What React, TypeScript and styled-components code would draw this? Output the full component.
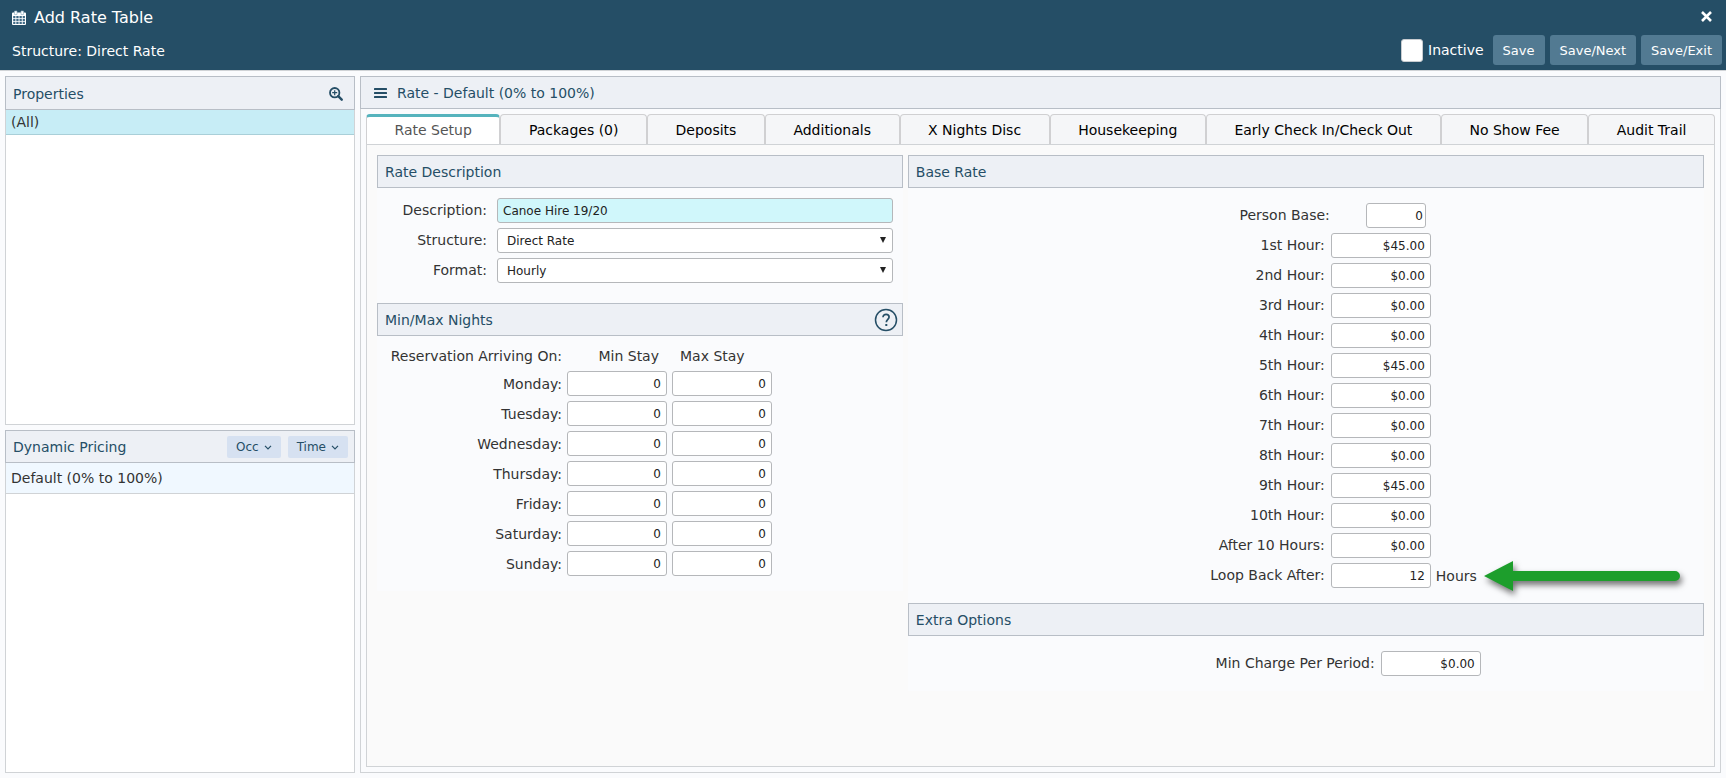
import React, { useId } from 'react';
import styled, { createGlobalStyle, css } from 'styled-components';

const GlobalStyle = createGlobalStyle`
  *, *::before, *::after { box-sizing: border-box; }
  body {
    margin: 0;
    background: #fafbfd;
    color: #333;
    font: 14px/20px Verdana, "DejaVu Sans", sans-serif;
  }
  button, input, select { font-family: inherit; }
`;

const line = '#b8bec6';
const softLine = '#d0d3d6';
const navy = '#254e66';

const Page = styled.div`
  display: flex;
  flex-direction: column;
  min-height: 100vh;
`;

const Header = styled.header`
  display: flex;
  flex-direction: column;
  height: 71px;
  padding: 0 4px 5px 12px;
  background: ${navy};
  border-bottom: 1px solid #d0d3d6;
  color: #fff;
`;

const HeaderRow = styled.div`
  display: flex;
  align-items: center;
  justify-content: space-between;
  height: 35px;
  &:last-child { height: 30px; }
`;

const Title = styled.h1`
  display: flex;
  align-items: center;
  gap: 8px;
  margin: 0;
  font-size: 16px;
  font-weight: 400;
`;

const Subtitle = styled.span`
  padding-top: 2px;
`;

const CloseButton = styled.button`
  display: flex;
  padding: 4px 5px 6px;
  margin-right: 5px;
  border: 0;
  background: none;
  color: #fff;
`;

const Actions = styled.div`
  display: flex;
  align-items: center;
  gap: 5px;
`;

const InactiveLabel = styled.label`
  display: flex;
  align-items: center;
  gap: 5px;
  margin-right: 4px;
`;

const CheckBox = styled.input`
  appearance: none;
  width: 22px;
  height: 23px;
  margin: 0;
  border: 1px solid #c8ccd0;
  border-radius: 3px;
  background: #fff;
`;

const ActionButton = styled.button`
  height: 30px;
  padding: 0 10px;
  border: 0;
  border-radius: 3px;
  background: #527a92;
  color: #fff;
  font-size: 13px;
`;

const Workspace = styled.div`
  display: grid;
  grid-template-columns: 350px minmax(0, 1fr);
  gap: 5px;
  flex: 1;
  padding: 5px;
`;

const Sidebar = styled.aside`
  display: grid;
  grid-template-rows: 51fr 50fr;
  gap: 5px;
`;

const Panel = styled.section<{ $white?: boolean }>`
  display: flex;
  flex-direction: column;
  border: 1px solid ${softLine};
  background: ${(p) => (p.$white ? '#fff' : '#fafbfd')};
`;

const PanelHead = styled.div<{ $tall?: boolean }>`
  display: flex;
  align-items: center;
  gap: 10px;
  height: ${(p) => (p.$tall ? 34 : 33)}px;
  margin: -1px -1px 0;
  padding: 1px 6px 0 7px;
  border: 1px solid ${line};
  background: #edf0f5;
  color: ${navy};
`;

const PanelTitle = styled.h2`
  margin: 0;
  font-size: 14px;
  font-weight: 400;
`;

const HeadTools = styled.div`
  display: flex;
  gap: 7px;
  margin-left: auto;
`;

const IconButton = styled.button`
  display: flex;
  padding: 0 5px;
  border: 0;
  background: none;
  color: ${navy};
`;

const DropButton = styled.button`
  display: flex;
  align-items: center;
  gap: 5px;
  height: 22px;
  padding: 0 9px;
  border: 0;
  border-radius: 2px;
  background: #d6e1f1;
  color: ${navy};
  font-size: 12px;
`;

const ListItem = styled.div<{ $selected?: boolean }>`
  padding: ${(p) => (p.$selected ? '2px 5px' : '5px')};
  border-bottom: 1px solid ${(p) => (p.$selected ? '#a9cfd8' : softLine)};
  background: ${(p) => (p.$selected ? '#c7edf6' : '#f0f8ff')};
`;

const MenuButton = styled(IconButton)`
  padding: 0 0 0 6px;
`;

const HelpButton = styled(IconButton)`
  padding: 0;
`;

const TabArea = styled.div`
  display: flex;
  flex-direction: column;
  flex: 1;
  margin: 5px;
`;

const TabList = styled.div`
  display: flex;
  height: 30px;
`;

const Tab = styled.button<{ $active?: boolean }>`
  flex: 1 1 auto;
  padding: 0;
  border: 1px solid #d0d0d2;
  border-bottom: 0;
  border-radius: 4px 4px 0 0;
  background: #f5f6f8;
  color: #000;
  font-size: 14px;
  ${(p) =>
    p.$active &&
    css`
      padding-bottom: 2px;
      border-top: 3px solid #55b3bd;
      background: #fff;
      color: #555;
    `}
`;

const TabBody = styled.div`
  display: flex;
  align-items: flex-start;
  flex: 1;
  padding: 10px;
  border: 1px solid ${softLine};
  background: #fafafa;
`;

const LeftColumn = styled.div`
  width: 40%;
  padding-right: 5px;
`;

const RightColumn = styled.div`
  width: 60%;
`;

const SectionHead = styled(PanelHead)`
  margin: 0;
  padding-right: 4px;
`;

const SectionBody = styled.div<{ $pad: string }>`
  display: flex;
  flex-direction: column;
  gap: 5px;
  padding: ${(p) => p.$pad};
  background: #fafbfd;
`;

const FieldRow = styled.div<{ $cols: string; $gap?: number }>`
  display: grid;
  grid-template-columns: ${(p) => p.$cols};
  column-gap: ${(p) => p.$gap ?? 6}px;
  align-items: center;
  height: 25px;
`;

const FieldLabel = styled.label<{ $inset?: boolean }>`
  padding-bottom: 1px;
  text-align: right;
  white-space: nowrap;
  margin-right: ${(p) => (p.$inset ? -5 : 0)}px;
`;

const FieldValue = styled.div<{ $inset?: boolean }>`
  display: flex;
  align-items: center;
  gap: 5px;
  height: 25px;
  padding-left: ${(p) => (p.$inset ? 35 : 0)}px;
`;

const control = css`
  height: 25px;
  border: 1px solid #b5b7ba;
  border-radius: 3px;
  background: #fff;
  color: #222;
  font-size: 12px;
`;

const TextInput = styled.input`
  ${control}
  width: 100%;
  padding: 0 5px;
  background: #d0f7fb;
`;

const NumberInput = styled.input<{ $small?: boolean }>`
  ${control}
  display: block;
  width: ${(p) => (p.$small ? 60 : 100)}px;
  padding: 0 ${(p) => (p.$small ? 2 : 5)}px;
  text-align: right;
`;

const SelectWrap = styled.div`
  position: relative;
  svg {
    position: absolute;
    right: 7px;
    top: 9px;
    pointer-events: none;
  }
`;

const Select = styled.select`
  ${control}
  appearance: none;
  display: block;
  width: 100%;
  padding: 0 9px;
`;

const NightsTable = styled.table`
  align-self: flex-start;
  border-collapse: collapse;
  td, th { padding: 0 5px 5px 0; font-weight: 400; }
`;

const DayHead = styled.th`
  width: 190px;
  text-align: right;
  white-space: nowrap;
`;

const StayHead = styled.th<{ $align: 'left' | 'right' }>`
  text-align: ${(p) => p.$align};
  span { padding: 0 8px; }
`;

const Arrow = styled.svg`
  flex: none;
  margin-left: 2px;
  overflow: visible;
  filter: drop-shadow(2px 4px 3px rgba(0, 0, 0, 0.55));
`;

const CalendarIcon = () => (
  <svg width="14" height="15" viewBox="0 0 14 15" aria-hidden="true">
    <path d="M1 2.500h12a1 1 0 0 1 1 1V14a1 1 0 0 1-1 1H1a1 1 0 0 1-1-1V3.500a1 1 0 0 1 1-1z" fill="#fff" />
    <path d="M2.500 1h2.500v3.500H2.500zM9 1h2.500v3.500H9z" fill="#fff" stroke="#8fb0c2" strokeWidth=".6" />
    <path
      d="M1.200 6h2.200v2.200H1.200zM4.300 6h2.300v2.200H4.300zM7.500 6h2.300v2.200H7.500zM10.700 6h2.200v2.200h-2.200zM1.200 9h2.200v2.200H1.200zM4.300 9h2.300v2.200H4.300zM7.500 9h2.300v2.200H7.500zM10.700 9h2.200v2.200h-2.200zM1.200 12h2.200v2H1.200zM4.300 12h2.300v2H4.300zM7.500 12h2.300v2H7.500zM10.700 12h2.200v2h-2.200z"
      fill="#3f6a86"
    />
  </svg>
);

const CloseIcon = () => (
  <svg width="11" height="11" viewBox="0 0 11 11" stroke="currentColor" strokeWidth="2.600" aria-hidden="true">
    <path d="M1 1l9 9M10 1l-9 9" />
  </svg>
);

const ZoomIcon = () => (
  <svg width="14" height="14" viewBox="0 0 14 14" fill="none" stroke="currentColor" aria-hidden="true">
    <circle cx="5.700" cy="5.700" r="4.700" strokeWidth="1.800" />
    <path d="M9.200 9.200l3.500 3.500" strokeWidth="2.400" strokeLinecap="round" />
    <path d="M5.700 3.200v5M3.200 5.700h5" strokeWidth="1.200" />
  </svg>
);

const MenuIcon = () => (
  <svg width="13" height="10" viewBox="0 0 13 10" fill="currentColor" aria-hidden="true">
    <rect width="13" height="2" rx=".5" />
    <rect y="4" width="13" height="2" rx=".5" />
    <rect y="8" width="13" height="2" rx=".5" />
  </svg>
);

const ChevronIcon = () => (
  <svg width="8" height="5" viewBox="0 0 8 5" fill="none" stroke="currentColor" strokeWidth="1.200" aria-hidden="true">
    <path d="M1 .8l3 3 3-3" />
  </svg>
);

const HelpIcon = () => (
  <svg width="24" height="24" viewBox="0 0 24 24" fill="none" stroke="currentColor" aria-hidden="true">
    <circle cx="12" cy="12" r="10.500" strokeWidth="1.500" />
    <path d="M9 9.300c0-1.900 1.300-3 3.100-3s3 1.100 3 2.700c0 2.300-2.800 2.500-2.800 5.300" strokeWidth="1.700" />
    <path d="M11.300 16h2v2h-2z" fill="currentColor" stroke="none" />
  </svg>
);

const tabs = [
  'Rate Setup',
  'Packages (0)',
  'Deposits',
  'Additionals',
  'X Nights Disc',
  'Housekeeping',
  'Early Check In/Check Out',
  'No Show Fee',
  'Audit Trail',
];

const days = ['Monday', 'Tuesday', 'Wednesday', 'Thursday', 'Friday', 'Saturday', 'Sunday'];

const hours: [string, string][] = [
  ['1st Hour:', '$45.00'],
  ['2nd Hour:', '$0.00'],
  ['3rd Hour:', '$0.00'],
  ['4th Hour:', '$0.00'],
  ['5th Hour:', '$45.00'],
  ['6th Hour:', '$0.00'],
  ['7th Hour:', '$0.00'],
  ['8th Hour:', '$0.00'],
  ['9th Hour:', '$45.00'],
  ['10th Hour:', '$0.00'],
  ['After 10 Hours:', '$0.00'],
];

const rateColumns = 'minmax(0, 19fr) minmax(0, 17fr)';
const extraColumns = 'minmax(0, 13fr) minmax(0, 9fr)';

type NumberFieldProps = {
  label: string;
  value: string;
  cols?: string;
  small?: boolean;
  children?: React.ReactNode;
};

function NumberField({ label, value, cols = rateColumns, small, children }: NumberFieldProps) {
  const id = useId();
  return (
    <FieldRow $cols={cols}>
      <FieldLabel htmlFor={id} $inset={small}>{label}</FieldLabel>
      <FieldValue $inset={small}>
        <NumberInput id={id} defaultValue={value} $small={small} />
        {children}
      </FieldValue>
    </FieldRow>
  );
}

function SelectField({ label, value }: { label: string; value: string }) {
  const id = useId();
  return (
    <FieldRow $cols="110px minmax(0, 1fr)" $gap={10}>
      <FieldLabel htmlFor={id}>{label}</FieldLabel>
      <SelectWrap>
        <Select id={id} defaultValue={value}>
          <option>{value}</option>
        </Select>
        <svg width="6" height="6" viewBox="0 0 6 6" aria-hidden="true">
          <path d="M0 0h6L3 6z" fill="#222" />
        </svg>
      </SelectWrap>
    </FieldRow>
  );
}

export default function App() {
  return (
    <Page>
      <GlobalStyle />
      <Header>
        <HeaderRow>
          <Title><CalendarIcon />Add Rate Table</Title>
          <CloseButton aria-label="Close"><CloseIcon /></CloseButton>
        </HeaderRow>
        <HeaderRow>
          <Subtitle>Structure: Direct Rate</Subtitle>
          <Actions>
            <InactiveLabel><CheckBox type="checkbox" />Inactive</InactiveLabel>
            <ActionButton>Save</ActionButton>
            <ActionButton>Save/Next</ActionButton>
            <ActionButton>Save/Exit</ActionButton>
          </Actions>
        </HeaderRow>
      </Header>

      <Workspace>
        <Sidebar>
          <Panel $white>
            <PanelHead $tall>
              <PanelTitle>Properties</PanelTitle>
              <HeadTools>
                <IconButton aria-label="Search properties"><ZoomIcon /></IconButton>
              </HeadTools>
            </PanelHead>
            <ListItem $selected>(All)</ListItem>
          </Panel>
          <Panel $white>
            <PanelHead>
              <PanelTitle>Dynamic Pricing</PanelTitle>
              <HeadTools>
                <DropButton>Occ<ChevronIcon /></DropButton>
                <DropButton>Time<ChevronIcon /></DropButton>
              </HeadTools>
            </PanelHead>
            <ListItem>Default (0% to 100%)</ListItem>
          </Panel>
        </Sidebar>

        <Panel as="main">
          <PanelHead>
            <MenuButton aria-label="Menu"><MenuIcon /></MenuButton>
            <PanelTitle>Rate - Default (0% to 100%)</PanelTitle>
          </PanelHead>
          <TabArea>
            <TabList role="tablist">
              {tabs.map((name, i) => (
                <Tab key={name} role="tab" aria-selected={i === 0} $active={i === 0}>{name}</Tab>
              ))}
            </TabList>
            <TabBody role="tabpanel">
              <LeftColumn>
                <SectionHead><PanelTitle>Rate Description</PanelTitle></SectionHead>
                <SectionBody $pad="10px 10px 20px 0">
                  <FieldRow $cols="110px minmax(0, 1fr)" $gap={10}>
                    <FieldLabel htmlFor="description">Description:</FieldLabel>
                    <TextInput id="description" defaultValue="Canoe Hire 19/20" />
                  </FieldRow>
                  <SelectField label="Structure:" value="Direct Rate" />
                  <SelectField label="Format:" value="Hourly" />
                </SectionBody>
                <SectionHead>
                  <PanelTitle>Min/Max Nights</PanelTitle>
                  <HeadTools>
                    <HelpButton aria-label="Help"><HelpIcon /></HelpButton>
                  </HeadTools>
                </SectionHead>
                <SectionBody $pad="10px 0">
                  <NightsTable>
                    <thead>
                      <tr>
                        <DayHead scope="col">Reservation Arriving On:</DayHead>
                        <StayHead scope="col" $align="right"><span>Min Stay</span></StayHead>
                        <StayHead scope="col" $align="left"><span>Max Stay</span></StayHead>
                      </tr>
                    </thead>
                    <tbody>
                      {days.map((day) => (
                        <tr key={day}>
                          <DayHead scope="row">{day}:</DayHead>
                          <td><NumberInput aria-label={`${day} min stay`} defaultValue="0" /></td>
                          <td><NumberInput aria-label={`${day} max stay`} defaultValue="0" /></td>
                        </tr>
                      ))}
                    </tbody>
                  </NightsTable>
                </SectionBody>
              </LeftColumn>
              <RightColumn>
                <SectionHead><PanelTitle>Base Rate</PanelTitle></SectionHead>
                <SectionBody $pad="15px 0">
                  <NumberField label="Person Base:" value="0" small />
                  {hours.map(([label, value]) => (
                    <NumberField key={label} label={label} value={value} />
                  ))}
                  <NumberField label="Loop Back After:" value="12">
                    <span>Hours</span>
                    <Arrow width="196" height="30" viewBox="0 0 196 30" aria-hidden="true">
                      <path d="M0 15L29 0V10H191a5 5 0 0 1 0 10H29V30z" fill="#1d9e2c" />
                    </Arrow>
                  </NumberField>
                </SectionBody>
                <SectionHead><PanelTitle>Extra Options</PanelTitle></SectionHead>
                <SectionBody $pad="15px 0">
                  <NumberField label="Min Charge Per Period:" value="$0.00" cols={extraColumns} />
                </SectionBody>
              </RightColumn>
            </TabBody>
          </TabArea>
        </Panel>
      </Workspace>
    </Page>
  );
}
